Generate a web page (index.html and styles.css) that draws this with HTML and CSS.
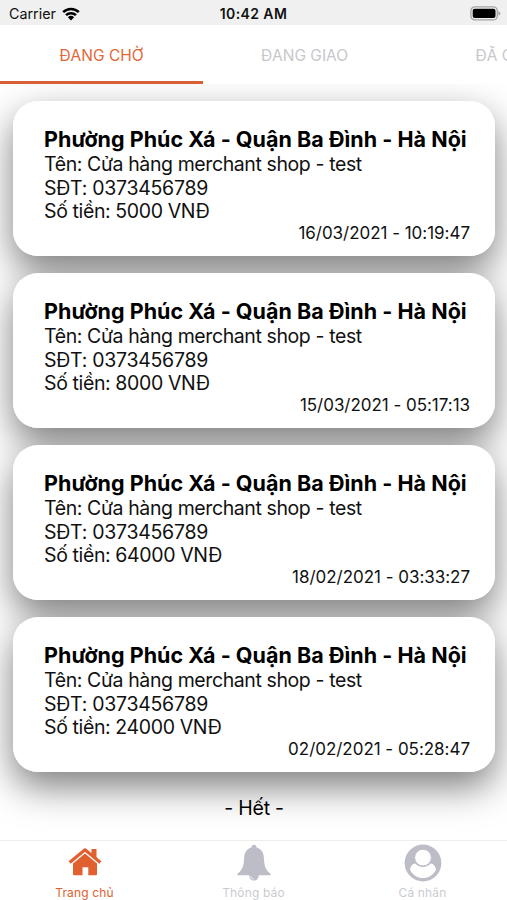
FILE: index.html
```html
<!DOCTYPE html>
<html lang="vi">
<head>
  <meta charset="UTF-8">
  <meta name="viewport" content="width=device-width, initial-scale=1.0">
  <title>Đơn hàng</title>
  <link rel="stylesheet" href="styles.css">
</head>
<body>
  <div class="status-bar">
    <div class="carrier">
      <span>Carrier</span>
      <svg viewBox="0 0 18 14" width="18" height="14">
        <path d="M1.2 5.2a11 11 0 0 1 15.6 0M4 8.2a7.2 7.2 0 0 1 10 0" fill="none" stroke="#000" stroke-width="2.5"/>
        <path d="M5.9 10.2a4.5 4.5 0 0 1 6.2 0L9 13.4z" fill="#000"/>
      </svg>
    </div>
    <div class="clock">10:42 AM</div>
    <div class="battery">
      <svg viewBox="0 0 31 15" width="31" height="15">
        <rect x="0.9" y="0.9" width="26.4" height="13" rx="4" fill="#f0f0f0" stroke="#a4a4a4" stroke-width="1.3"/>
        <rect x="2.7" y="2.7" width="22.8" height="9.4" rx="2" fill="#000"/>
        <path d="M28.4 5.2q2 .7 2 2.2t-2 2.2z" fill="#a4a4a4"/>
      </svg>
    </div>
  </div>

  <nav class="tabs">
    <a class="tab active"><span>ĐANG CHỜ</span></a>
    <a class="tab"><span>ĐANG GIAO</span></a>
    <a class="tab"><span>ĐÃ GIAO</span></a>
  </nav>

  <main class="orders">
    <div class="card">
      <h2>Phường Phúc Xá - Quận Ba Đình - Hà Nội</h2>
      <p class="name">Tên: Cửa hàng merchant shop - test</p>
      <p>SĐT: 0373456789</p>
      <p class="amount">Số tiền: 5000 VNĐ</p>
      <div class="time">16/03/2021 - 10:19:47</div>
    </div>
    <div class="card">
      <h2>Phường Phúc Xá - Quận Ba Đình - Hà Nội</h2>
      <p class="name">Tên: Cửa hàng merchant shop - test</p>
      <p>SĐT: 0373456789</p>
      <p class="amount">Số tiền: 8000 VNĐ</p>
      <div class="time">15/03/2021 - 05:17:13</div>
    </div>
    <div class="card">
      <h2>Phường Phúc Xá - Quận Ba Đình - Hà Nội</h2>
      <p class="name">Tên: Cửa hàng merchant shop - test</p>
      <p>SĐT: 0373456789</p>
      <p class="amount">Số tiền: 64000 VNĐ</p>
      <div class="time">18/02/2021 - 03:33:27</div>
    </div>
    <div class="card">
      <h2>Phường Phúc Xá - Quận Ba Đình - Hà Nội</h2>
      <p class="name">Tên: Cửa hàng merchant shop - test</p>
      <p>SĐT: 0373456789</p>
      <p class="amount">Số tiền: 24000 VNĐ</p>
      <div class="time">02/02/2021 - 05:28:47</div>
    </div>
    <div class="end">- Hết -</div>
  </main>

  <footer class="bottom-nav">
    <a class="nav-item active">
      <svg viewBox="0 0 36 38" width="36" height="38">
        <path d="M2.6 18.6 18 5.800l15.400 12.800" fill="none" stroke="currentColor" stroke-width="3.2" stroke-linejoin="round"/>
        <path d="M24.500 5h5v10l-5-4.200zM6 19.400 18 9.600l12 9.800v10.700q0 1.200-1.200 1.200h-7.500v-8h-5.800v8H7.200Q6 31.300 6 30.100z" fill="currentColor"/>
      </svg>
      <span>Trang chủ</span>
    </a>
    <a class="nav-item">
      <svg viewBox="0 0 36 38" width="36" height="38">
        <path d="M18 .8c1.600 0 2.500.9 2.500 2.600 4.900 1.300 7.200 5 7.400 10.500.3 7.800 1.600 11.800 6.400 15.600.8.900.3 1.800-.8 1.800H2.500c-1.100 0-1.600-.9-.8-1.800C6.500 25.700 7.800 21.700 8.100 13.900c.2-5.500 2.500-9.200 7.400-10.500C15.500 1.700 16.400.8 18 .8z" fill="currentColor"/>
        <path d="M13.200 31h9.600c0 3.400-2 5.600-4.800 5.600S13.200 34.400 13.200 31z" fill="currentColor"/>
        <path d="M14.600 32c.2 1.700 1.500 3 3.200 3" fill="none" stroke="#fff" stroke-width=".8"/>
      </svg>
      <span>Thông báo</span>
    </a>
    <a class="nav-item">
      <svg viewBox="0 0 38 38" width="38" height="38">
        <circle cx="19" cy="19" r="18.400" fill="currentColor"/>
        <path d="M6 25.500c.8-3.600 2.400-5.700 5.300-5.900 4.200 4.600 11.200 4.600 15.400 0 2.900.2 4.500 2.300 5.300 5.900-2.200 5.400-7.200 8.600-13 8.600S8.200 30.900 6 25.500z" fill="#fff"/>
        <circle cx="19" cy="13.600" r="8.400" fill="#fff" stroke="currentColor" stroke-width="1"/>
      </svg>
      <span>Cá nhân</span>
    </a>
  </footer>
</body>
</html>
```

FILE: styles.css
```css
* {
  box-sizing: border-box;
}
body {
  margin: 0;
  height: 900px;
  display: flex;
  flex-direction: column;
  overflow: hidden;
  background-color: #fff;
  color: #111;
  font-family: Inter, "Noto Sans", sans-serif;
}
.status-bar {
  height: 25px;
  flex-shrink: 0;
  display: grid;
  grid-template-columns: 1fr auto 1fr;
  align-items: center;
  padding: 2px 6px 0 9px;
  background-color: #f0f0f0;
  font-size: 14.3px;
}
.carrier {
  display: flex;
  align-items: center;
  gap: 6px;
}
.clock {
  margin-right: 3px;
  font-weight: 600;
  font-size: 14px;
  letter-spacing: 0.4px;
}
.battery {
  display: flex;
  justify-content: flex-end;
}
.tabs {
  height: 59px;
  flex-shrink: 0;
  display: flex;
  overflow: hidden;
}
.tab {
  width: 203px;
  flex-shrink: 0;
  display: flex;
  align-items: center;
  justify-content: center;
  padding-top: 4px;
  border-bottom: 3px solid transparent;
  color: #c7c7cc;
  font-size: 15.5px;
}
.tab.active {
  color: #e0673a;
  border-bottom-color: #d95f35;
}
.orders {
  flex: 1;
  min-height: 0;
  display: flex;
  flex-direction: column;
  gap: 17px;
  padding: 17px 12px 0 13px;
  overflow: hidden;
  isolation: isolate;
}
.card {
  position: relative;
  height: 155px;
  flex-shrink: 0;
  padding: 25px 25px 0 31px;
  border-radius: 25px;
  background-color: #fff;
  white-space: nowrap;
}
/* shadow sits below every card so it never darkens a neighbour */
.card::before {
  content: "";
  position: absolute;
  inset: 0;
  z-index: -1;
  border-radius: 25px;
  box-shadow: 0 15px 37px rgba(0, 0, 0, 0.51);
}
.card h2 {
  margin: 0 0 1px;
  font-size: 21.5px;
  line-height: 26px;
  font-weight: 700;
  letter-spacing: 0.03px;
  color: #000;
}
.card p {
  margin: 0;
  font-size: 19.5px;
  line-height: 23.6px;
  letter-spacing: -0.28px;
}
.card .name {
  letter-spacing: -0.4px;
}
.card .amount {
  letter-spacing: -0.38px;
}
.time {
  text-align: right;
  font-size: 17px;
  line-height: 19px;
  letter-spacing: -0.03px;
}
.end {
  text-align: center;
  font-size: 19.5px;
  line-height: 24px;
  padding-top: 7px;
  letter-spacing: -0.2px;
  color: #000;
}
.bottom-nav {
  height: 60px;
  flex-shrink: 0;
  display: flex;
  border-top: 1px solid #ededed;
  background-color: #fff;
}
.nav-item {
  flex: 1;
  display: flex;
  flex-direction: column;
  align-items: center;
  padding-top: 3px;
  color: #bdbdc7;
  font-size: 12px;
}
.nav-item span {
  margin-top: 3px;
  line-height: 15px;
  letter-spacing: 0.15px;
  color: #cbcbcf;
}
.nav-item.active,
.nav-item.active span {
  color: #e1602f;
}
```
